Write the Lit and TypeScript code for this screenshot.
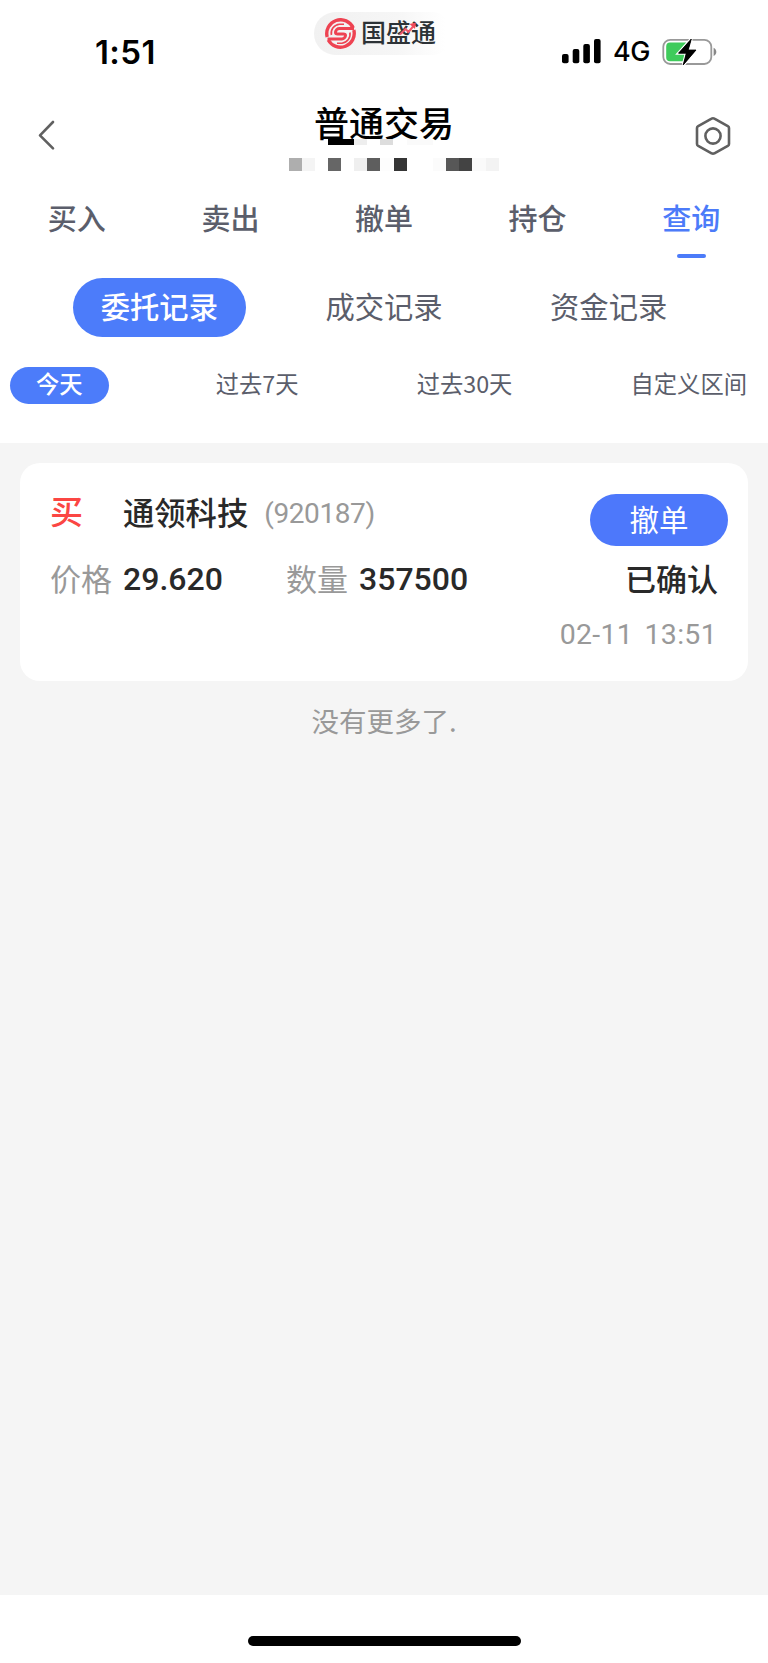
import { LitElement, html, css, svg } from 'lit';
import { customElement } from 'lit/decorators.js';
import { classMap } from 'lit/directives/class-map.js';

@customElement('status-bar')
class StatusBar extends LitElement {
  static styles = css`
    :host { display: grid; grid-template-columns: 1fr auto 1fr; height: 103px; box-sizing: border-box; }
    .time { align-self: center; padding-left: 95px; font: 600 33px/40px Inter, sans-serif; letter-spacing: 0.4px; color: #000; }
    .brand { display: flex; align-items: center; align-self: start; margin-top: 12px; height: 43px; width: 140px; box-sizing: border-box; padding-left: 11px; gap: 5px; border-radius: 22px; background: linear-gradient(90deg, #f1f1f1 0%, #f6f6f6 60%, #fff 94%); }
    .name { position: relative; display: flex; font: 500 25px/36px 'Noto Sans CJK SC', sans-serif; color: #2c3236; margin-top: -5px; }
    .arrow { position: absolute; left: 38px; top: 9px; }
    .right { display: flex; align-items: center; justify-content: flex-end; padding-right: 51px; }
    .net { font: 500 27px/36px Inter, sans-serif; margin: 0 12px 0 12px; letter-spacing: -0.4px; color: #000; }
    svg { display: block; }
  `;
  render() {
    return html`
      <div class="time">1:51</div>
      <div class="brand">
        <svg width="31" height="31" viewBox="0 0 31 31" fill="none" stroke="#ee4352" stroke-width="3.4">
          <path d="M2.200 19A13.800 13.800 0 0 1 28.200 10" />
          <path d="M28.800 12A13.800 13.800 0 0 1 3.300 22" />
          <path d="M29 10.500H14.500a4 4 0 0 0-4 3.700q0 1.800 2.200 1.800h5.600q2.200 0 2.200 1.600a3.600 3.600 0 0 1-3.700 3.300H2.500" stroke-width="3" />
          <path d="M6.400 17A9 9 0 0 1 14.500 6.200H19M24.900 14.500A9 9 0 0 1 17 25.200H12" stroke-width="1.600" />
        </svg>
        <div class="name">国盛通
          <svg class="arrow" width="18" height="14" viewBox="0 0 18 14"><path d="M1 12.500 6.500 7l3 3 5-6" fill="none" stroke="#f0566a" stroke-width="2" /><path d="M10.500 2 17 .5 16 7z" fill="#f04a5a" /></svg>
        </div>
      </div>
      <div class="right">
        <svg width="39" height="25" viewBox="0 0 39 25"><rect x="0" y="15" width="6.6" height="9.2" rx="2"/><rect x="10.7" y="10" width="6.6" height="14.2" rx="2"/><rect x="21.3" y="5" width="6.6" height="19.2" rx="2"/><rect x="32" y="0" width="6.6" height="24.2" rx="2"/></svg>
        <span class="net">4G</span>
        <svg width="55" height="28" viewBox="0 0 55 28">
          <rect x="1.3" y="1.8" width="48" height="24.2" rx="7" fill="none" stroke="#999" stroke-width="1.8"/>
          <path d="M8 4.6h16v18.6H8A3.8 3.8 0 0 1 4.2 19.4V8.4A3.8 3.8 0 0 1 8 4.6z" fill="#3fcb5b"/>
          <path d="M51.6 9.8c3.6 1.6 3.6 6.6 0 8.2z" fill="#888"/>
          <path d="M29.3 1 16.5 15.2h7.8L21.2 27 34 12h-7.800z" fill="#000" stroke="#fff" stroke-width="3" paint-order="stroke"/>
          <path d="M29.3 1 16.5 15.2h7.8L21.2 27 34 12h-7.800z" fill="#000" stroke="#000" stroke-width=".8" stroke-linejoin="round"/>
        </svg>
      </div>`;
  }
}

const MOSAIC: [number, number, number, number, string][] = [
  [39, 0, 26, 5.5, '#000'], [65, 0, 13, 5.5, '#eee'], [91, 0, 13, 5.5, '#ddd'], [118, 0, 26, 5.5, '#fafafa'],
  [0, 19, 13, 13, '#aeaeae'], [13, 19, 13, 13, '#f4f4f4'], [39, 19, 13, 13, '#666'], [65, 19, 13, 13, '#efefef'],
  [78, 19, 13, 13, '#5e5e5e'], [91, 19, 13, 13, '#fdfdfd'], [105, 19, 13, 13, '#353535'], [144, 19, 13, 13, '#fbfbfb'],
  [157, 19, 13, 13, '#575757'], [170, 19, 13, 13, '#434343'], [183, 19, 14, 13, '#fafafa'], [197, 19, 13, 13, '#f3f3f3'],
];

@customElement('nav-header')
class NavHeader extends LitElement {
  static styles = css`
    :host { display: grid; grid-template-columns: 1fr 220px 1fr; height: 77px; }
    .back { padding: 17px 0 0 37px; }
    .gear { padding: 13px 37px 0 0; justify-self: end; }
    .mid { position: relative; text-align: center; }
    .title { font: 500 35px/40px 'Noto Sans CJK SC', sans-serif; color: #000; white-space: nowrap; margin-top: -1px; }
    .mosaic { position: absolute; left: 15px; top: 36px; }
    svg { display: block; }
  `;
  render() {
    return html`
      <div class="back"><svg width="20" height="31" viewBox="0 0 20 31"><path d="M16 2 3 15.3 16 28.3" fill="none" stroke="#606060" stroke-width="2.6" stroke-linecap="round" stroke-linejoin="round"/></svg></div>
      <div class="mid">
        <div class="title">普通交易</div>
        <svg class="mosaic" width="210" height="32" shape-rendering="crispEdges">${MOSAIC.map(([x, y, w, h, c]) => svg`<rect x=${x} y=${y} width=${w} height=${h} fill=${c}></rect>`)}</svg>
      </div>
      <div class="gear"><svg width="36" height="40" viewBox="0 0 36 40" fill="none" stroke="#606060" stroke-width="2.6" stroke-linejoin="round"><path d="M18 2.2Q18.6 2.2 19.4 2.7L32.8 10.1Q34 10.8 34 12V28Q34 29.200 32.8 29.900L19.400 37.300Q18 38 16.600 37.300L3.200 29.900Q2 29.200 2 28V12Q2 10.800 3.200 10.100L16.600 2.700Q17.400 2.200 18 2.200z"/><circle cx="18" cy="20" r="7.600"/></svg></div>`;
  }
}

@customElement('order-card')
class OrderCard extends LitElement {
  static styles = css`
    :host { display: block; box-sizing: border-box; height: 218px; border-radius: 20px; background: #fff; padding: 31px 20px 0 30px; font-family: 'Noto Sans CJK SC', sans-serif; color: #292929; white-space: nowrap; }
    .row { display: flex; align-items: center; }
    .top { height: 52px; }
    .side { width: 73px; font-size: 33px; font-weight: 500; line-height: 40px; color: #fb4643; margin-top: -20px; }
    .name { font-size: 31.300px; font-weight: 500; line-height: 40px; margin-top: -17px; }
    .code { font: 400 28px/40px Roboto, sans-serif; color: #999; margin: -12px 0 0 16px; letter-spacing: -0.4px; }
    .cancel { margin-left: auto; width: 138px; height: 52px; border: 0; padding: 0 0 4px; border-radius: 26px; background: #4d78fb; color: #fff; font: 400 29.500px/48px 'Noto Sans CJK SC', sans-serif; }
    .detail { height: 40px; margin-top: 13px; font-size: 31px; padding-right: 10px; }
    .label, .state { margin-top: -4px; }
    .label { color: #999; }
    .num { font: 500 32px/40px Roboto, sans-serif; margin-left: 11px; }
    .price { width: 163px; }
    .state { margin-left: auto; font-weight: 500; }
    .date { margin-top: 16px; padding-right: 11px; text-align: right; font: 400 28.500px/40px Roboto, sans-serif; color: #999; word-spacing: 4px; letter-spacing: 0.300px; }
  `;
  render() {
    return html`
      <div class="row top"><span class="side">买</span><span class="name">通领科技</span><span class="code">(920187)</span><button class="cancel">撤单</button></div>
      <div class="row detail"><span class="label">价格</span><span class="num price">29.620</span><span class="label">数量</span><span class="num">357500</span><span class="state">已确认</span></div>
      <div class="date">02-11 13:51</div>`;
  }
}

@customElement('app-root')
class AppRoot extends LitElement {
  static styles = css`
    :host { display: flex; flex-direction: column; width: 768px; height: 1663px; background: #fff; overflow: hidden; font-family: 'Noto Sans CJK SC', sans-serif; color: #5b5e6b; white-space: nowrap; }
    .tabs { display: grid; grid-template-columns: repeat(5, 1fr); height: 98px; }
    .tab { display: flex; flex-direction: column; align-items: center; padding-top: 17px; font-size: 29px; line-height: 40px; font-weight: 500; }
    .tab.on { color: #4c7bf9; }
    .tab.on::after { content: ''; width: 29px; height: 4px; border-radius: 3px; background: #4c7bf9; margin-top: 17px; }
    .kinds { display: grid; grid-template-columns: repeat(3, 1fr); padding: 0 47px; justify-items: center; }
    .kind { padding: 0 28px; height: 59px; line-height: 55px; font-size: 29.300px; border-radius: 30px; }
    .ranges { display: flex; justify-content: space-between; padding: 30px 10px 39px; }
    .range { padding: 0 11px; height: 37px; line-height: 33px; font-size: 23.300px; border-radius: 19px; }
    .range.on { padding: 0 26px; }
    .kind.on, .range.on { background: #4c7cfa; color: #fff; font-weight: 500; }
    .list { flex: 1; background: #f5f5f5; padding: 20px 20px 0; }
    .end { text-align: center; color: #999; font-size: 27.500px; line-height: 40px; margin-top: 19px; }
    .home { height: 68px; display: flex; justify-content: center; }
    .bar { width: 273px; height: 10px; border-radius: 5px; background: #000; margin-top: 41px; }
  `;
  render() {
    const items = (names: string[], cls: string, active: number) =>
      names.map((n, i) => html`<div class=${classMap({ [cls]: true, on: i === active })}>${n}</div>`);
    return html`
      <status-bar></status-bar>
      <nav-header></nav-header>
      <nav class="tabs">${items(['买入', '卖出', '撤单', '持仓', '查询'], 'tab', 4)}</nav>
      <div class="kinds">${items(['委托记录', '成交记录', '资金记录'], 'kind', 0)}</div>
      <div class="ranges">${items(['今天', '过去7天', '过去30天', '自定义区间'], 'range', 0)}</div>
      <main class="list"><order-card></order-card><div class="end">没有更多了.</div></main>
      <div class="home"><div class="bar"></div></div>`;
  }
}
